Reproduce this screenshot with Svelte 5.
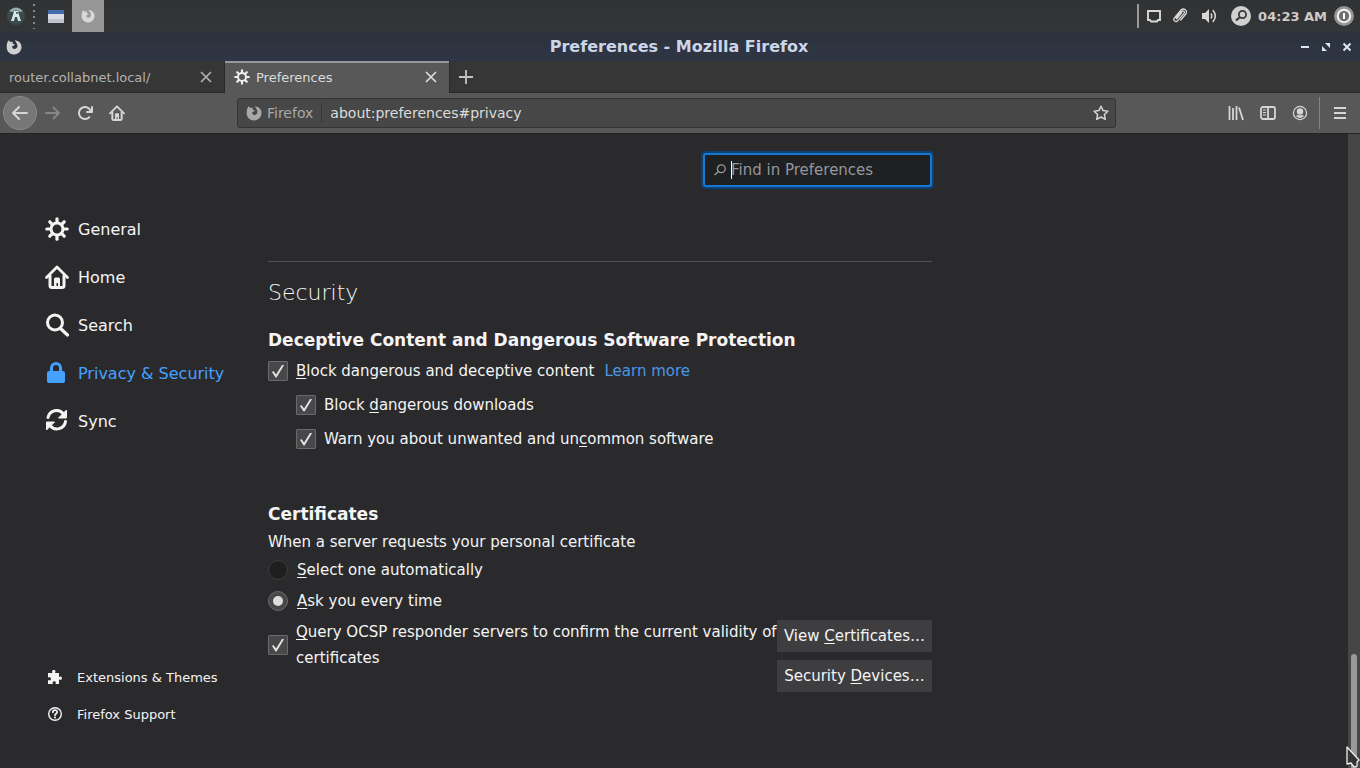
<script lang="ts">
	let search = $state('');
	let current = $state('privacy');
	let certChoice = $state('ask');
	let blockContent = $state(true);
	let blockDownloads = $state(true);
	let warnSoftware = $state(true);
	let ocsp = $state(true);

	const categories = [
		{ id: 'general', label: 'General' },
		{ id: 'home', label: 'Home' },
		{ id: 'search', label: 'Search' },
		{ id: 'privacy', label: 'Privacy & Security' },
		{ id: 'sync', label: 'Sync' }
	];
	const teeth = [0, 45, 90, 135, 180, 225, 270, 315];
</script>

{#snippet gear()}
	<svg viewBox="0 0 24 24" aria-hidden="true">
		<circle cx="12" cy="12" r="6" fill="none" stroke="currentColor" stroke-width="3" />
		{#each teeth as angle}
			<path d="M12 1.8V5" stroke="currentColor" stroke-width="3.200" stroke-linecap="round" transform="rotate({angle} 12 12)" />
		{/each}
	</svg>
{/snippet}

{#snippet house()}
	<svg viewBox="0 0 24 24" aria-hidden="true" fill="none" stroke="currentColor" stroke-linecap="round" stroke-linejoin="round">
		<path d="M1.500 12.500 12 2l10.500 10.500" stroke-width="2.800" />
		<path d="M5 11v9.500q0 2 2 2h10q2 0 2-2V11" stroke-width="3" />
		<path d="M9 22v-8q0-1.500 1.500-1.500h3q1.500 0 1.500 1.500v8h-2v-4h-1.500v4z" fill="currentColor" stroke="none" />
	</svg>
{/snippet}

{#snippet firefox()}
	<svg viewBox="0 0 16 16" aria-hidden="true">
		<path d="M2.800 1.300 4.300 3q1.300-.6 2.700 0C6.300 3.900 6.500 5 7.800 5.100c1 .1 1.200.6.5 1.200l-1.900.9c-.6.9.2 2.800 1.900 2.700 1.900 0 3.300-1.400 3.100-3.300C11.200 4.500 9.900 3.100 8.600 1.200c3.300.2 5.700 1.900 6.600 4.600 1.300 4.700-2 9.400-7 9.600-4.100.1-7.400-3-7.500-7C.6 5.500 1.100 2.900 2.800 1.300z" fill="currentColor" />
	</svg>
{/snippet}

{#snippet cross()}
	<svg viewBox="0 0 12 12" aria-hidden="true"><path d="m1.500 1.500 9 9m0-9-9 9" stroke="currentColor" stroke-width="1.700" stroke-linecap="round" /></svg>
{/snippet}

<div class="desktop">
	<header class="panel">
		<button class="start" aria-label="Applications">
			<svg viewBox="0 0 20 20" aria-hidden="true">
				<circle cx="10" cy="10" r="9" fill="#3b4b4d" />
				<path d="M3 5q7-7 14 0l-3 1-4-2-4 2z" fill="#9ab0b0" />
				<path d="M8 5h4l1 4 2 6h-3l-1-4H9l-1 4H5l2-6z" fill="#dce8e8" />
				<circle cx="11" cy="7" r="1" fill="#354448" />
			</svg>
		</button>
		<span class="grip"></span>
		<button class="task" aria-label="Files">
			<svg viewBox="0 0 16 13" aria-hidden="true">
				<path d="M0 0h16v13H0z" fill="#d9dce3" />
				<path d="M0 0h16v4H0z" fill="#426cae" />
				<path d="M0 9h16v4H0z" fill="#c0c4cc" />
			</svg>
		</button>
		<button class="task running" aria-label="Mozilla Firefox">{@render firefox()}</button>
		<div class="tray">
			<span class="tray-line"></span>
			<svg class="i16" viewBox="0 0 16 16" aria-hidden="true"><path d="M2 3h12v9h-2l-1 1.500H5L4 12H2z" fill="none" stroke="currentColor" stroke-width="1.900" /></svg>
			<svg class="i16" viewBox="0 0 16 16" aria-hidden="true"><path d="m4 10 5.500-6.500c1.500-1.600 3.700.1 2.500 1.800l-6.300 7.500c-2 2-5-.4-3.500-2.700L8.800 2.300c3-3 7.300.4 5 3.700l-5 6M4.700 10.800l4.900-6" fill="none" stroke="currentColor" stroke-width="1.300" stroke-linecap="round" /></svg>
			<svg class="i16 volume" viewBox="0 0 16 16" aria-hidden="true"><path d="M1 5h3l4-4v14l-4-4H1z" fill="currentColor" /><path d="M9.800 5.500q2 2.500 0 5M11.800 2q5 6 0 12" fill="none" stroke="currentColor" stroke-width="1.500" /></svg>
			<svg class="i20 gap" viewBox="0 0 20 20" aria-hidden="true"><circle cx="10" cy="10" r="10" fill="#d0d0d0" /><circle cx="11.500" cy="8.500" r="3.600" fill="none" stroke="#3a3a3a" stroke-width="1.800" /><path d="m9 11-4 3.500" stroke="#3a3a3a" stroke-width="2.200" /></svg>
			<time>04:23 AM</time>
			<svg class="i20" viewBox="0 0 20 20" aria-hidden="true"><circle cx="10" cy="10" r="10" fill="#969696" /><circle cx="10" cy="10" r="6.200" fill="#707070" stroke="#f5f5f5" stroke-width="2" /><path d="M10 7v6" stroke="#fff" stroke-width="2" /></svg>
		</div>
	</header>

	<div class="titlebar">
		<span class="title-icon">{@render firefox()}</span>
		<h1>Preferences - Mozilla Firefox</h1>
		<div class="window-buttons">
			<button aria-label="Minimize"><svg viewBox="0 0 10 10"><path d="M1 5h8" stroke="currentColor" stroke-width="2" /></svg></button>
			<button aria-label="Maximize"><svg viewBox="0 0 10 10"><path d="M4 1h5v5zM1 4v5h5z" fill="currentColor" /></svg></button>
			<button aria-label="Close window"><svg viewBox="0 0 10 10"><path d="m1.500 1.500 7 7m0-7-7 7" stroke="currentColor" stroke-width="2" /></svg></button>
		</div>
	</div>

	<div class="tabs">
		<div class="tab">
			<span class="tab-text">router.collabnet.local/</span>
			<button aria-label="Close router.collabnet.local">{@render cross()}</button>
		</div>
		<div class="tab active">
			<span class="tab-icon">{@render gear()}</span>
			<span class="tab-text">Preferences</span>
			<button aria-label="Close Preferences">{@render cross()}</button>
		</div>
		<button class="new-tab" aria-label="New tab"><svg viewBox="0 0 14 14"><path d="M7 0v14M0 7h14" stroke="currentColor" stroke-width="1.800" /></svg></button>
	</div>

	<nav class="toolbar" aria-label="Navigation">
		<button class="back" aria-label="Back">
			<svg class="i16" viewBox="0 0 16 16"><path d="M15 7H3.414l4.293-4.293a1 1 0 0 0-1.414-1.414l-6 6a1 1 0 0 0 0 1.414l6 6a1 1 0 0 0 1.414-1.414L3.414 9H15a1 1 0 0 0 0-2z" fill="currentColor" /></svg>
		</button>
		<button class="tool" aria-label="Forward" disabled>
			<svg class="i16" viewBox="0 0 16 16"><path d="M1 8h13M8.500 2.500 14 8l-5.500 5.500" fill="none" stroke="currentColor" stroke-width="1.800" stroke-linecap="round" stroke-linejoin="round" /></svg>
		</button>
		<button class="tool" aria-label="Reload">
			<svg class="i16" viewBox="0 0 16 16"><path d="M15 1a1 1 0 0 0-1 1v2.418A6.995 6.995 0 1 0 8 15a6.954 6.954 0 0 0 4.950-2.050 1 1 0 0 0-1.414-1.414A5.019 5.019 0 1 1 12.549 6H10a1 1 0 0 0 0 2h5a1 1 0 0 0 1-1V2a1 1 0 0 0-1-1z" fill="currentColor" /></svg>
		</button>
		<button class="tool home" aria-label="Home">{@render house()}</button>
		<div class="urlbar">
			<span class="identity">{@render firefox()}Firefox</span>
			<input type="text" aria-label="Address" value="about:preferences#privacy" />
			<button aria-label="Bookmark this page">
				<svg class="i16" viewBox="0 0 16 16"><path d="m8 1.200 2.100 4.400 4.800.6-3.500 3.300.9 4.800L8 12l-4.300 2.300.9-4.800L1.100 6.200l4.800-.6z" fill="none" stroke="currentColor" stroke-width="1.500" stroke-linejoin="round" /></svg>
			</button>
		</div>
		<div class="tools">
			<button class="tool" aria-label="Library"><svg class="i16" viewBox="0 0 16 16"><path d="M1.500 1v14M5 3v12M8.500 1v14M11 2.500 15 15" stroke="currentColor" stroke-width="1.800" /></svg></button>
			<button class="tool" aria-label="Sidebars"><svg class="i16" viewBox="0 0 16 16"><rect x="1" y="2" width="14" height="12" rx="2" fill="none" stroke="currentColor" stroke-width="1.800" /><path d="M8 2v12" stroke="currentColor" stroke-width="1.800" /><path d="M3 5h3M3 7.500h3M3 10h3" stroke="currentColor" /></svg></button>
			<button class="tool" aria-label="Account"><svg class="i16" viewBox="0 0 16 16"><circle cx="8" cy="8" r="6.600" fill="none" stroke="currentColor" stroke-width="1.200" /><circle cx="8" cy="6.500" r="3.200" fill="currentColor" /><path d="M3.800 10.800q1.700-.8 2.700-.8 1.500.8 3 0 1 0 2.700.8Q8 15.400 3.800 10.800z" fill="currentColor" /></svg></button>
			<span class="tool-line"></span>
			<button class="tool" aria-label="Menu"><svg class="i16" viewBox="0 0 16 16"><path d="M2 3h12M2 8h12M2 13h12" stroke="currentColor" stroke-width="2" /></svg></button>
		</div>
	</nav>

	<div class="page">
		<aside>
			<nav class="categories" aria-label="Categories">
				{#each categories as cat}
					<a href="#{cat.id}" class:selected={current === cat.id} onclick={() => (current = cat.id)}>
						{#if cat.id === 'general'}
							{@render gear()}
						{:else if cat.id === 'home'}
							{@render house()}
						{:else if cat.id === 'search'}
							<svg viewBox="0 0 24 24" aria-hidden="true"><circle cx="10" cy="9.500" r="7.500" fill="none" stroke="currentColor" stroke-width="3" /><path d="m15.500 15.500 7 6.500" stroke="currentColor" stroke-width="3.200" stroke-linecap="round" /></svg>
						{:else if cat.id === 'privacy'}
							<svg viewBox="0 0 24 24" aria-hidden="true"><path d="M6.500 12V7a4.500 4.500 0 0 1 9 0v5" fill="none" stroke="currentColor" stroke-width="3" /><rect x="2" y="10" width="18" height="12" rx="2" fill="currentColor" /></svg>
						{:else}
							<svg viewBox="0 0 24 24" aria-hidden="true"><path d="M3 8.500A8.700 8.700 0 0 1 18.500 5M20.500 12.500A8.700 8.700 0 0 1 5 16.500" fill="none" stroke="currentColor" stroke-width="3" stroke-linecap="round" /><path d="M21.500 1v8h-8zM1.500 21v-8h8z" fill="currentColor" stroke="currentColor" stroke-linejoin="round" /></svg>
						{/if}
						<span>{cat.label}</span>
					</a>
				{/each}
			</nav>
			<div class="side-links">
				<a href="#addons">
					<svg class="i16" viewBox="0 0 16 16" aria-hidden="true"><path d="M2 4h3.500C5 3 4.700 1 6.800 1S8.700 3 8 4h4v4c1-.8 3-.8 3 1.200S13 11 12 10.500V15H8.500c.7-1.500.2-2.800-1.300-2.800S5.200 13.500 6 15H1v-4c1.600.8 3 .3 3-1.200S2.500 7.700 1 8.500V4z" fill="currentColor" /></svg>
					<span>Extensions &amp; Themes</span>
				</a>
				<a href="#support">
					<svg class="i16" viewBox="0 0 16 16" aria-hidden="true"><circle cx="8" cy="8" r="6.300" fill="none" stroke="currentColor" stroke-width="1.400" /><path d="M5.800 6.300c0-3 4.400-2.800 4.400-.3C10.200 7.800 8 7.600 8 9.300" fill="none" stroke="currentColor" stroke-width="1.700" stroke-linecap="round" /><circle cx="8" cy="11.500" r="1" fill="currentColor" /></svg>
					<span>Firefox Support</span>
				</a>
			</div>
		</aside>

		<main>
			<div class="search">
				<svg viewBox="0 0 12 12" aria-hidden="true"><circle cx="7.300" cy="4.700" r="3.900" fill="none" stroke="currentColor" stroke-width="1.300" /><path d="M4.500 7.500.5 11" stroke="currentColor" stroke-width="1.300" /></svg>
				<input type="text" aria-label="Find in Preferences" placeholder="Find in Preferences" bind:value={search} />
				<span class="caret"></span>
			</div>

			<hr />
			<h2>Security</h2>

			<section>
				<h3>Deceptive Content and Dangerous Software Protection</h3>
				<div class="row">
					<label><input type="checkbox" bind:checked={blockContent} /><span><u>B</u>lock dangerous and deceptive content</span></label>
					<a class="more" href="#learn-more">Learn more</a>
				</div>
				<div class="row sub">
					<label><input type="checkbox" bind:checked={blockDownloads} disabled={!blockContent} /><span>Block <u>d</u>angerous downloads</span></label>
				</div>
				<div class="row sub">
					<label><input type="checkbox" bind:checked={warnSoftware} disabled={!blockContent} /><span>Warn you about unwanted and un<u>c</u>ommon software</span></label>
				</div>
			</section>

			<section class="certificates">
				<h3>Certificates</h3>
				<p>When a server requests your personal certificate</p>
				<div class="radios">
					<label><input type="radio" name="cert" value="auto" bind:group={certChoice} /><span><u>S</u>elect one automatically</span></label>
					<label><input type="radio" name="cert" value="ask" bind:group={certChoice} /><span><u>A</u>sk you every time</span></label>
				</div>
				<div class="ocsp">
					<label><input type="checkbox" bind:checked={ocsp} /><span><u>Q</u>uery OCSP responder servers to confirm the current validity of certificates</span></label>
					<div class="buttons">
						<button>View <u>C</u>ertificates…</button>
						<button>Security <u>D</u>evices…</button>
					</div>
				</div>
			</section>
		</main>

		<div class="scrollbar"><span></span></div>
	</div>

	<svg class="pointer" viewBox="0 0 14 22" aria-hidden="true"><path d="M1 1v17l4-1 3 4 3-1v-4l2-2z" fill="#333" stroke="#eee" stroke-width="1.300" stroke-linejoin="round" /></svg>
</div>

<style>
	:global(body) {
		background: #2a2a2d;
	}

	.desktop {
		position: relative;
		display: flex;
		flex-direction: column;
		min-height: 100vh;
		overflow: hidden;
		background: #2a2a2d;
		color: #f4f4f5;
		font-family: 'DejaVu Sans', sans-serif;
		font-size: 15px;
	}

	.desktop * {
		box-sizing: border-box;
	}

	button {
		display: flex;
		align-items: center;
		justify-content: center;
		padding: 0;
		border: 0;
		background: none;
		color: inherit;
		font: inherit;
	}

	svg {
		display: block;
		flex: none;
	}

	a {
		color: inherit;
		text-decoration: none;
	}

	u {
		text-underline-offset: 2px;
		text-decoration-skip-ink: none;
	}

	.i16 {
		width: 16px;
		height: 16px;
	}

	.i20 {
		width: 20px;
		height: 20px;
	}

	.panel {
		display: flex;
		height: 32px;
		background: linear-gradient(#303233, #333536);
	}

	.start {
		width: 32px;
	}

	.start svg {
		width: 20px;
		height: 20px;
	}

	.grip {
		width: 8px;
		margin: 3px 0;
		background: radial-gradient(circle at 2px 2px, #888 1px, transparent 1px) 0 0 / 8px 6px;
	}

	.task {
		width: 32px;
	}

	.task svg {
		width: 16px;
	}

	.running {
		background: #969696;
		color: #d8d8d8;
	}

	.running svg {
		width: 14px;
	}

	.tray {
		display: flex;
		align-items: center;
		gap: 10px;
		margin-left: auto;
		padding-right: 6px;
		color: #d8d8d8;
	}

	.tray-line {
		width: 2px;
		height: 24px;
		margin-right: -3px;
		background: #999;
	}

	.tray .volume {
		margin-left: 3px;
	}

	.tray .gap {
		margin: 0 -3px 0 4px;
	}

	time {
		margin-right: -3px;
		color: #cfcac8;
		font-size: 13px;
		font-weight: bold;
	}

	.titlebar {
		display: flex;
		align-items: center;
		justify-content: space-between;
		height: 29px;
		padding: 0 8px 0 6px;
		background: linear-gradient(#2c323b, #2f3545);
	}

	.title-icon {
		width: 52px;
		color: #d0d0d0;
	}

	.title-icon svg {
		width: 16px;
	}

	h1 {
		margin: 0;
		color: #ccd6e8;
		font-size: 16px;
		line-height: 28px;
	}

	.window-buttons {
		display: flex;
		gap: 11px;
		color: #dce6f5;
	}

	.window-buttons svg {
		width: 10px;
	}

	.tabs {
		display: flex;
		height: 32px;
		background: #363636;
		box-shadow: inset 0 -1px #292929;
		font-size: 13px;
	}

	.tab {
		display: flex;
		align-items: center;
		width: 225px;
		padding: 0 12px 0 9px;
		border-right: 1px solid #292929;
		color: #b5b2ae;
	}

	.tab.active {
		background: #585858;
		box-shadow: inset 0 2px #97979d;
		color: #dcdcdc;
	}

	.tab-text {
		flex: 1;
	}

	.tab-icon {
		margin-right: 6px;
		color: #eee;
	}

	.tab-icon svg {
		width: 16px;
	}

	.tab button svg {
		width: 12px;
	}

	.new-tab {
		width: 32px;
		color: #c4c4c4;
	}

	.new-tab svg {
		width: 14px;
	}

	.toolbar {
		display: flex;
		align-items: center;
		height: 41px;
		padding: 0 4px 0 3px;
		border-bottom: 1px solid #252525;
		background: #585858;
		color: #d6d6d6;
	}

	.back {
		width: 34px;
		height: 34px;
		border: 1px solid #8a8a8a;
		border-radius: 50%;
		background: #777;
	}

	.tool {
		width: 32px;
		height: 32px;
	}

	.tool:disabled {
		color: #888;
	}

	.home svg {
		width: 16px;
	}

	.urlbar {
		display: flex;
		align-items: center;
		flex: 1;
		max-width: 879px;
		height: 30px;
		margin-left: 104px;
		padding-right: 6px;
		border: 1px solid #343434;
		border-radius: 3px;
		background: #474747;
	}

	.identity {
		display: flex;
		align-items: center;
		gap: 5px;
		height: 20px;
		padding: 0 8px;
		border-right: 1px solid #353535;
		color: #a8a8a8;
		font-size: 14px;
	}

	.identity svg {
		width: 16px;
	}

	.urlbar input {
		flex: 1;
		min-width: 0;
		padding: 0 8px;
		border: 0;
		outline: 0;
		background: none;
		color: #dcdcdc;
		font: inherit;
		font-size: 14px;
	}

	.tools {
		display: flex;
		align-items: center;
		margin-left: auto;
	}

	.tool-line {
		width: 1px;
		height: 32px;
		margin: 0 4px 0 3px;
		background: #858585;
	}

	.page {
		display: flex;
		flex: 1;
	}

	aside {
		display: flex;
		flex-direction: column;
		justify-content: space-between;
		width: 268px;
		padding: 71px 0 36px 45px;
	}

	.categories {
		display: flex;
		flex-direction: column;
		font-size: 16px;
	}

	.categories a {
		display: flex;
		align-items: center;
		gap: 9px;
		height: 48px;
	}

	.categories svg {
		width: 24px;
		height: 24px;
	}

	.categories .selected {
		color: #45a1ff;
	}

	.side-links {
		display: flex;
		flex-direction: column;
		gap: 1px;
		padding-left: 2px;
		font-size: 13px;
	}

	.side-links a {
		display: flex;
		align-items: center;
		gap: 14px;
		height: 36px;
	}

	main {
		flex: 0 1 664px;
		padding: 19px 0 24px;
		line-height: 26px;
	}

	.search {
		position: relative;
		display: flex;
		align-items: center;
		gap: 5px;
		width: 229px;
		height: 34px;
		margin-left: auto;
		padding: 0 9px;
		border: 2px solid #1878d0;
		border-radius: 3px;
		background: #1f2022;
		box-shadow: 0 0 0 2px #0c4078;
		color: #999;
	}

	.search svg {
		width: 12px;
	}

	.search input {
		flex: 1;
		min-width: 0;
		padding: 0;
		border: 0;
		outline: 0;
		background: none;
		color: #eee;
		font: inherit;
		caret-color: transparent;
	}

	.search input::placeholder {
		color: #96969b;
		opacity: 1;
	}

	.caret {
		position: absolute;
		left: 26px;
		width: 1px;
		height: 18px;
		background: #fff;
	}

	hr {
		height: 1px;
		margin: 74px 0 16px;
		border: 0;
		background: #525256;
	}

	h2 {
		margin: 0 0 20px;
		font-size: 22px;
		font-weight: 200;
		line-height: 30px;
	}

	h3 {
		margin: 0;
		font-size: 17px;
		line-height: 24px;
	}

	section {
		display: flex;
		flex-direction: column;
	}

	.row {
		display: flex;
		gap: 10px;
		margin-bottom: 8px;
	}

	h3 + .row {
		margin-top: 6px;
	}

	.sub {
		padding-left: 28px;
	}

	label {
		display: flex;
		align-items: center;
		gap: 8px;
	}

	label input {
		display: grid;
		flex: none;
		place-items: center;
		width: 20px;
		height: 20px;
		margin: 0;
		appearance: none;
		border: 1px solid #6a6a6a;
		border-radius: 1px;
		background: #48484a;
	}

	label input[type='checkbox']:checked::before {
		content: '';
		width: 12px;
		height: 13px;
		background: #e4e4e4;
		clip-path: polygon(0 58%, 12% 50%, 34% 76%, 86% 0, 100% 6%, 38% 100%, 30% 100%);
	}

	label input[type='radio'] {
		border-color: #3c3c3e;
		border-radius: 50%;
		background: #1f1f20;
	}

	label input[type='radio']:checked {
		border-color: #6a6a6a;
		background: #48484a;
	}

	label input[type='radio']:checked::before {
		content: '';
		width: 10px;
		height: 10px;
		border-radius: 50%;
		background: #ddd;
	}

	.more {
		color: #4a97e4;
	}

	.certificates {
		margin-top: 42px;
	}

	p {
		margin: 3px 0 2px;
	}

	.radios {
		display: flex;
		flex-direction: column;
		gap: 5px;
		margin-bottom: 5px;
	}

	.radios label {
		gap: 9px;
	}

	.ocsp {
		display: flex;
		align-items: flex-start;
	}

	.ocsp label {
		flex: 1;
	}

	.buttons {
		display: flex;
		flex: none;
		flex-direction: column;
		gap: 8px;
		margin-top: 1px;
	}

	.buttons button {
		display: block;
		height: 32px;
		padding: 0 7px;
		background: #3e3e40;
	}

	.scrollbar {
		display: flex;
		align-items: flex-end;
		justify-content: center;
		width: 12px;
		margin-left: auto;
		background: #464646;
	}

	.scrollbar span {
		width: 6px;
		height: 18%;
		border-radius: 3px 3px 0 0;
		background: #999;
	}

	.pointer {
		position: absolute;
		right: 0;
		bottom: 0;
		width: 14px;
		height: 22px;
	}
</style>
